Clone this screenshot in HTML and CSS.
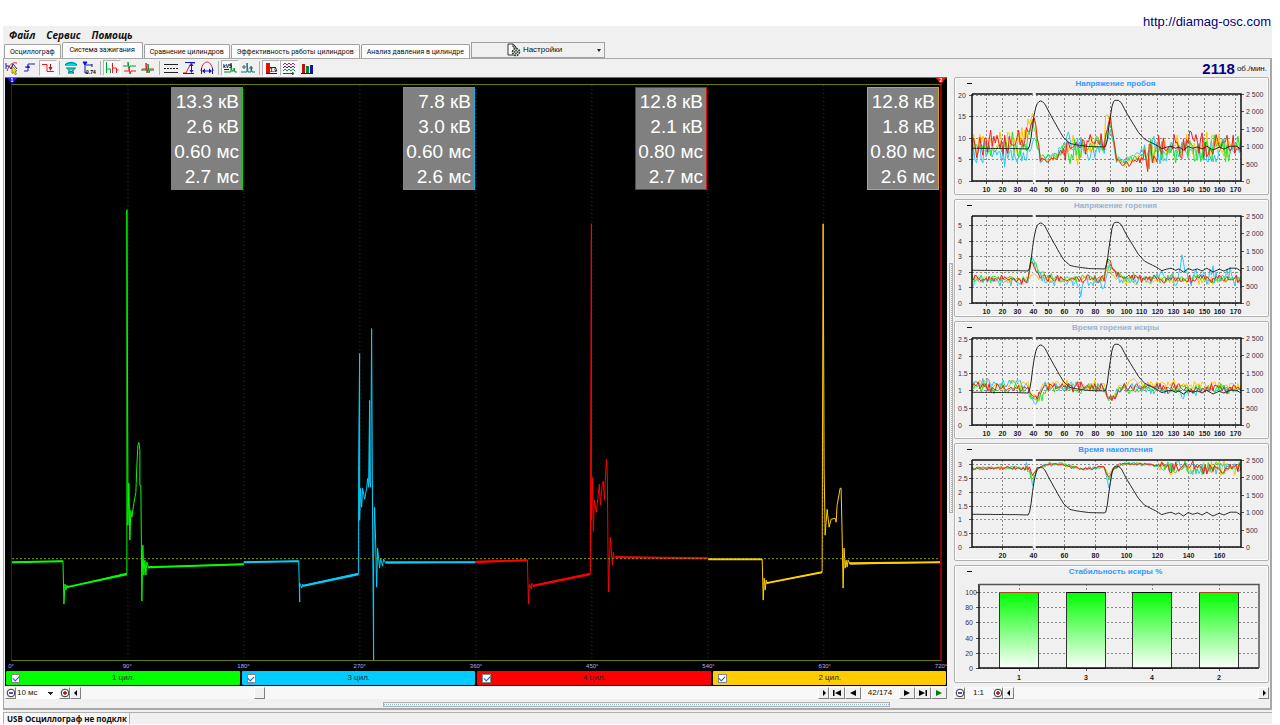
FILE: index.html
```html
<!DOCTYPE html>
<html lang="ru">
<head>
<meta charset="utf-8">
<title>Осциллограф — Система зажигания</title>
<link rel="stylesheet" href="styles.css">
</head>
<body>
<header class="site"><a href="http://diamag-osc.com">http://diamag-osc.com</a></header>
<div class="window">
  <nav class="menu">
    <button type="button">Файл</button><button type="button">Сервис</button><button type="button">Помощь</button>
  </nav>
  <div class="tabs" role="tablist">
    <button type="button" role="tab" class="tab">Осциллограф</button>
    <button type="button" role="tab" class="tab active" aria-selected="true">Система зажигания</button>
    <button type="button" role="tab" class="tab">Сравнение цилиндров</button>
    <button type="button" role="tab" class="tab">Эффективность работы цилиндров</button>
    <button type="button" role="tab" class="tab">Анализ давления в цилиндре</button>
    <button type="button" class="settings">
      <svg width="14" height="14" viewBox="0 0 14 14"><path d="M1 1h5l3 3v8H1zM6 1v3h3" fill="#fff" stroke="#333"/><circle cx="9" cy="9" r="3.5" fill="#cfd8cf" stroke="#344034" stroke-width="1.6" stroke-dasharray="1.8 .9"/><circle cx="9" cy="9" r="1.4" fill="#fff" stroke="#344034"/></svg>
      <span>Настройки</span><i class="caret"></i>
    </button>
  </div>
  <div class="page">
    <div class="toprow">
      <div class="toolbar">
        <button type="button" aria-label="Курсор"><svg viewBox="0 0 14 14"><path d="M1 2v6M1 5h3l2 3 2-5 4 5" fill="none" stroke="#1414c8"/><path d="M2 10c2-6 5-9 10-8" fill="none" stroke="#e02020"/><path d="M7 5l5 5-2 .3 1.5 2.7-1.6.6-1.4-2.5L7 12.500z" fill="#ffe600" stroke="#554400" stroke-width=".6"/></svg></button>
        <button type="button" aria-label="Фронт"><svg viewBox="0 0 14 14"><path d="M1 10h4V3h7M2 6h5" fill="none" stroke="#1c1cd0"/><path d="M3 7l2-3 2 3z" fill="#1c1cd0"/></svg></button>
        <button type="button" class="on" aria-label="Спад"><svg viewBox="0 0 14 14"><path d="M1 3.500h5v7h7" fill="none" stroke="#e02020"/><path d="M9.500 3v4" stroke="#a01010"/><path d="M7.500 6l2 4 2-4z" fill="#c01010"/></svg></button>
        <i class="sep"></i>
        <button type="button" aria-label="Синхронизация"><svg viewBox="0 0 14 14"><path d="M1 3c3-3 9-3 12 0v2H1zM3 7h8v2H3zM4 10h6v3H4z" fill="#00d8e8"/><path d="M1 4c3-3 9-3 12 0M2 7h10M4 9l6 3M10 9l-6 3" fill="none" stroke="#087878"/></svg></button>
        <button type="button" aria-label="Время"><svg viewBox="0 0 14 14"><path d="M1 1h4L3 4zM3 2v10M4 4h6" fill="#1010d0" stroke="#1010d0"/><path d="M10 3v3M3 12h3" stroke="#222"/><text x="4" y="13" font-size="5" font-weight="bold">0.74</text></svg></button>
        <i class="sep"></i>
        <button type="button" class="on" aria-label="Парад"><svg viewBox="0 0 14 14"><path d="M1.500 1v11M1.500 8h4v4" fill="none" stroke="#00a030"/><path d="M7.500 2v10M7.500 7h4v5M11.500 9h2" fill="none" stroke="#e02020"/></svg></button>
        <button type="button" aria-label="Растр"><svg viewBox="0 0 14 14"><path d="M0 5h5V1l1 6 1-2h6" fill="none" stroke="#00a030"/><path d="M1 10h5V6l1 7 1-3h5" fill="none" stroke="#e02020"/></svg></button>
        <button type="button" aria-label="Наложение"><svg viewBox="0 0 14 14"><path d="M1 8h4V2l1 10 1-4h6" fill="none" stroke="#e02020"/><path d="M0 9h7V3l1 9 1-3h4" fill="none" stroke="#00902c"/></svg></button>
        <i class="sep"></i>
        <button type="button" aria-label="Сетка"><svg viewBox="0 0 14 14"><path d="M0 3.500h14M0 11.500h14" stroke="#222"/><path d="M0 7.500h14" stroke="#222" stroke-dasharray="2 1"/></svg></button>
        <button type="button" aria-label="По высоте"><svg viewBox="0 0 14 14"><path d="M1 12h3L9 2h4" fill="none" stroke="#e02020"/><path d="M3 1.500h10M1 12.500h11M9.500 4v7" stroke="#1414c8"/><path d="M7.500 5l2-3 2 3zM7.500 9l2 3 2-3z" fill="#1414c8"/></svg></button>
        <button type="button" aria-label="По ширине"><svg viewBox="0 0 14 14"><path d="M1 10C2 3 5 1 7 1s5 2 6 9" fill="none" stroke="#e02020"/><path d="M3 10h8M1.500 7v6M12.500 7v6" stroke="#1414c8"/><path d="M5 7.500L2 10l3 2.500zM9 7.500l3 2.500-3 2.500z" fill="#1414c8"/></svg></button>
        <i class="sep"></i>
        <button type="button" class="on" aria-label="Значения"><svg viewBox="0 0 14 14"><path d="M1 11h7V2l1 8h2V7l1 4h2" fill="none" stroke="#008c2c"/><text x="0" y="7" font-size="5" font-weight="bold">kV5</text><path d="M1 8.500h5" stroke="#222"/></svg></button>
        <button type="button" aria-label="Отметки"><svg viewBox="0 0 14 14"><path d="M0 11h6V2l1 9h3V5l1 6h3" fill="none" stroke="#087878"/><path d="M1 6h4M3 4v4M8 7h4" stroke="#555"/></svg></button>
        <i class="sep"></i>
        <button type="button" class="on" aria-label="Таблица"><svg viewBox="0 0 14 14"><path d="M2 2h4v10H2z" fill="#e01010"/><text x="6" y="11" font-size="5" font-weight="bold">1.9</text><path d="M2 12.500h11M6 6.500h6" stroke="#222"/></svg></button>
        <button type="button" class="on" aria-label="Графики"><svg viewBox="0 0 14 14"><g fill="none"><path d="M1 4l2-2 2 2 2-2 2 2 2-2 2 2" stroke="#e02020"/><path d="M1 7l2-2 2 2 2-2 2 2 2-2 2 2" stroke="#2020e0"/><path d="M1 10l2-2 2 2 2-2 2 2 2-2 2 2" stroke="#00a030"/><path d="M1 12.500h11M10 11l2 1.500-2 1.500" stroke="#444"/></g></svg></button>
        <button type="button" aria-label="Диаграмма"><svg viewBox="0 0 14 14"><path d="M2 3h3v9H2z" fill="#c01010"/><path d="M6 5h3v7H6z" fill="#008830"/><path d="M10 4h3v8h-3z" fill="#1414a8"/><path d="M1 12.500h12" stroke="#222"/></svg></button>
      </div>
      <div class="rpm"><strong>2118</strong><span>об./мин.</span></div>
    </div>
    <div class="work">
      <section class="left">
        <div class="scope">
          <div class="flags"><b class="start">1</b><b class="end">2</b></div>
          <div class="plot">
            <svg class="wave" viewBox="12 84 929 576" preserveAspectRatio="none" id="wave"></svg>
            <div class="readouts">
              <div><p class="box green">13.3 кВ<br>2.6 кВ<br>0.60 мс<br>2.7 мс</p></div>
              <div><p class="box cyan">7.8 кВ<br>3.0 кВ<br>0.60 мс<br>2.6 мс</p></div>
              <div><p class="box red">12.8 кВ<br>2.1 кВ<br>0.80 мс<br>2.7 мс</p></div>
              <div><p class="box gold">12.8 кВ<br>1.8 кВ<br>0.80 мс<br>2.6 мс</p></div>
            </div>
          </div>
          <div class="degrees"><span>0°</span><span>90°</span><span>180°</span><span>270°</span><span>360°</span><span>450°</span><span>540°</span><span>630°</span><span>720°</span></div>
          <div class="cylinders">
            <label class="cyl green"><input type="checkbox" checked><span>1 цил.</span></label>
            <label class="cyl cyan"><input type="checkbox" checked><span>3 цил.</span></label>
            <label class="cyl red"><input type="checkbox" checked><span>4 цил.</span></label>
            <label class="cyl gold"><input type="checkbox" checked><span>2 цил.</span></label>
          </div>
        </div>
        <div class="controls">
          <button type="button" aria-label="Уменьшить"><svg viewBox="0 0 10 10"><circle cx="5" cy="5" r="3.800" fill="#fff" stroke="#333"/><path d="M3 5h4" stroke="#1414a0" stroke-width="1.500"/></svg></button>
          <select aria-label="Развёртка"><option>10 мс</option></select>
          <button type="button" aria-label="Увеличить"><svg viewBox="0 0 10 10"><circle cx="5" cy="5" r="3.800" fill="#fff" stroke="#333"/><path d="M3 5h4M5 3v4" stroke="#a01414" stroke-width="1.500"/></svg></button>
          <button type="button" aria-label="Влево"><svg viewBox="0 0 10 10"><path d="M6 2v6L3 5z"/></svg></button>
          <div class="track"><i class="thumb"></i></div>
          <button type="button" aria-label="Вправо"><svg viewBox="0 0 10 10"><path d="M4 2v6l3-3z"/></svg></button>
          <button type="button" class="wide" aria-label="В начало"><svg viewBox="0 0 10 10"><path d="M1 2h1.500v6H1zM9 2v6L3 5z"/></svg></button>
          <button type="button" class="wide" aria-label="Назад"><svg viewBox="0 0 10 10"><path d="M8 2v6L2 5z"/></svg></button>
          <output>42/174</output>
          <button type="button" class="wide" aria-label="Вперёд"><svg viewBox="0 0 10 10"><path d="M2 2v6l6-3z"/></svg></button>
          <button type="button" class="wide" aria-label="В конец"><svg viewBox="0 0 10 10"><path d="M1 2v6l6-3zM7.500 2H9v6H7.500z"/></svg></button>
          <button type="button" class="wide" aria-label="Пуск"><svg viewBox="0 0 10 10"><path d="M2 2v6l6-3z" fill="#008000"/></svg></button>
        </div>
        <div class="hgrip"><i></i></div>
      </section>
      <div class="vgrip"><i></i></div>
      <aside class="side">
        <section class="panel" data-chart="breakdown"><h2>Напряжение пробоя</h2></section>
        <section class="panel dim" data-chart="burn"><h2>Напряжение горения</h2></section>
        <section class="panel dim" data-chart="time"><h2>Время горения искры</h2></section>
        <section class="panel" data-chart="dwell"><h2>Время накопления</h2></section>
        <section class="panel" data-chart="stability"><h2>Стабильность искры %</h2></section>
        <div class="controls">
          <button type="button" aria-label="Уменьшить"><svg viewBox="0 0 10 10"><circle cx="5" cy="5" r="3.800" fill="#fff" stroke="#333"/><path d="M3 5h4" stroke="#1414a0" stroke-width="1.500"/></svg></button>
          <output class="scale">1:1</output>
          <button type="button" aria-label="Увеличить"><svg viewBox="0 0 10 10"><circle cx="5" cy="5" r="3.800" fill="#fff" stroke="#333"/><path d="M3 5h4M5 3v4" stroke="#a01414" stroke-width="1.500"/></svg></button>
          <button type="button" aria-label="Влево"><svg viewBox="0 0 10 10"><path d="M6 2v6L3 5z"/></svg></button>
          <div class="track"></div>
          <button type="button" aria-label="Вправо"><svg viewBox="0 0 10 10"><path d="M4 2v6l3-3z"/></svg></button>
        </div>
      </aside>
    </div>
  </div>
  <footer class="status"><span>USB Осциллограф не подклк</span></footer>
</div>
<script src="charts.js"></script>
</body>
</html>
```
FILE: styles.css
```css
* { box-sizing: border-box; }
body {
  margin: 0;
  background: #fff;
  color: #111;
  font: 8px/10px "Liberation Sans", Arial, sans-serif;
}
button, select, input, output { font: inherit; color: inherit; margin: 0; padding: 0; }
h2, p { margin: 0; }
svg { display: block; }

.site {
  height: 26px;
  padding: 13px 9px 0 0;
  text-align: right;
  font-size: 13px;
  line-height: 17px;
}
.site a { color: #000080; text-decoration: none; position: relative; }

.window { margin: 0 8px 4px 3px; background: #f0f0f0; }

.menu { display: flex; gap: 11px; padding: 1px 6px 0; height: 16px; }
.menu button {
  border: 0;
  background: none;
  font: italic bold 10px/14px "Open Sans", "Noto Sans", sans-serif;
}

.tabs {
  display: flex;
  align-items: flex-end;
  gap: 1px;
  height: 16px;
  padding-left: 1px;
}
.tab {
  height: 14px;
  padding: 0 5px;
  border: 1px solid #a0a0a0;
  border-bottom: 0;
  border-radius: 2px 2px 0 0;
  background: #fcfcfc;
  font-family: Roboto, "Liberation Sans", sans-serif;
  font-size: 7px;
  white-space: nowrap;
}
.tab.active { height: 16px; padding: 0 7px 2px; }
.settings {
  display: flex;
  align-items: center;
  gap: 2px;
  width: 134px;
  height: 16px;
  padding: 0 3px 0 35px;
  border: 1px solid #a0a0a0;
  background: #f0f0f0;
}
.caret { margin-left: auto; border: 2px solid transparent; border-top: 3px solid #222; border-bottom: 0; }

.page { border: 1px solid #a8a8a8; border-width: 1px 2px 2px 1px; padding: 1px 1px 0 0; }
.toprow { display: flex; justify-content: space-between; height: 17px; }
.toolbar { display: flex; margin-left: -1px; }
.toolbar button {
  width: 18px;
  height: 16px;
  padding: 0 1px;
  border: 1px solid transparent;
  background: none;
}
.toolbar button.on { border-color: #b4b4b4 #fff #fff #b4b4b4; background: #f8f8f8; }
.toolbar svg { width: 14px; height: 14px; }
.sep { width: 1px; height: 14px; margin: 1px 2px; background: #b0b0b0; }
.rpm { display: flex; align-items: center; gap: 2px; padding-right: 2px; }
.rpm strong { color: #000080; font-size: 15px; }

.work { display: flex; }
.left { flex: 1; display: flex; flex-direction: column; min-width: 0; }
.scope {
  flex: 1;
  display: flex;
  flex-direction: column;
  margin-left: 1px;
  border-top: 1px solid #707070;
  background: #000;
}
.flags { display: flex; justify-content: space-between; height: 6px; padding: 0 1px 0 2px; }
.flags b {
  width: 10px;
  height: 6px;
  color: #fff;
  font-size: 5px;
  line-height: 5px;
  text-align: center;
  clip-path: polygon(0 0, 100% 0, 50% 100%);
}
.start { background: #1414ff; }
.end { background: #ff1010; }
.plot {
  position: relative;
  flex: 1;
  margin: 0 5px 0 6px;
  border: 1px solid #6c7a00;
  border-left-color: #1414c0;
  border-right: 2px solid #900000;
}
.wave { position: absolute; width: 100%; height: 100%; }
.wave path { fill: none; vector-effect: non-scaling-stroke; }
.readouts { position: absolute; inset: 2px 0 auto; display: grid; grid-template-columns: repeat(4, 1fr); }
.box {
  width: 72px;
  margin: 0 1px 0 auto;
  padding: 1px 3px 0 0;
  border: 1px solid;
  background: #808080;
  color: #fff;
  font-size: 19px;
  line-height: 25px;
  text-align: right;
  white-space: nowrap;
}
.box.green { border-color: #00d800; }
.box.cyan { border-color: #00b8f0; }
.box.red { border-color: #d81010; }
.box.gold { border-color: #d8a800; }
.degrees { display: flex; justify-content: space-between; height: 10px; padding: 0 6px; color: #b8a8ff; font-size: 6px; }
.degrees span { display: flex; justify-content: center; width: 0; }
.cylinders { display: grid; grid-template-columns: repeat(4, 1fr); gap: 2px; padding: 0 1px 1px; }
.cyl { display: flex; align-items: center; height: 14px; padding: 0 5px; border-radius: 1px; color: #222; }
.cyl span { flex: 1; text-align: center; padding-right: 8px; }
.cyl input {
  appearance: none;
  width: 9px;
  height: 9px;
  border: 1px solid #888;
  background: #fff;
  display: grid;
  place-items: center;
}
.cyl input:checked::after {
  content: "";
  width: 5px;
  height: 3px;
  border: solid #1060c8;
  border-width: 0 0 1px 1px;
  transform: rotate(-45deg);
}
.cyl.green { background: #00ff00; }
.cyl.cyan { background: #00ccff; }
.cyl.red { background: #ff0000; }
.cyl.gold { background: #ffcc00; }

.controls { display: flex; height: 12px; margin-top: 1px; background: #f8f8f8; }
.controls button {
  width: 11px;
  height: 12px;
  border: 1px solid #fff;
  border-right-color: #808080;
  border-bottom-color: #808080;
  background: #f0f0f0;
}
.controls button.wide { width: 16px; }
.controls svg { width: 10px; height: 10px; margin: auto; }
.controls select {
  appearance: none;
  width: 43px;
  border: 0;
  padding-left: 1px;
  background: #fff conic-gradient(from -45deg at 50% 100%, #222 90deg, transparent 0) no-repeat 32px 5px / 5px 3px;
}
.left .controls { margin-left: 1px; }
.left .controls output { width: 38px; text-align: center; line-height: 12px; }
.controls .scale { width: 27px; text-align: center; line-height: 12px; }
.track { flex: 1; }
.thumb {
  display: block;
  width: 11px;
  height: 12px;
  margin-left: 23.5%;
  border: 1px solid #fff;
  border-right-color: #808080;
  border-bottom-color: #808080;
  background: #f0f0f0;
}

.hgrip { height: 9px; padding: 3px 57px 1px 379px; }
.hgrip i { display: block; height: 5px; border: 1px solid #b0b0b0; background: linear-gradient(90deg, #90b8e0 50%, #f4f8ff 0) 0 1px / 2px 1px repeat-x; }
.vgrip { display: flex; align-items: center; width: 7px; padding: 0 1px 9px 2px; }
.vgrip i { width: 5px; height: 250px; border: 1px solid #b0b0b0; background: linear-gradient(#90b8e0 50%, #f4f8ff 0) 1px 0 / 2px 2px repeat-y; }

.side { width: 315px; display: flex; flex-direction: column; gap: 4px; padding-bottom: 9px; }
.panel { height: 118px; border: 1px solid #b0b0b0; border-radius: 2px; box-shadow: inset 0 0 0 1px #fff; padding-top: 1px; }
.panel h2 { color: #3399ff; font-size: 8px; line-height: 10px; text-align: center; padding-right: 9px; }
.panel h2::before { content: ""; float: left; width: 5px; height: 1px; margin: 4px 0 0 12px; background: #111; }
.panel.dim h2 { color: #99b4d1; }
.panel svg { width: 313px; height: 104px; }
.panel path { fill: none; }
.axis { font-size: 7px; fill: #403048; }
.axis-x { font-size: 7px; font-weight: bold; text-anchor: middle; fill: #222; }
.grid { stroke: #8a8a8a; stroke-dasharray: 2 2; }
.side .controls { margin-top: 0; }

.status { margin-top: 2px; border-top: 1px solid #b0b0b0; }
.status span {
  display: block;
  width: 127px;
  padding-left: 3px;
  border: solid #b0b0b0;
  border-width: 0 1px 0 1px;
  background: #f8f8f8;
  font: bold 8px/11px "Open Sans", "Noto Sans", sans-serif;
  white-space: nowrap;
}
```
FILE: charts.js
```js
const COLORS = ['#ffc400', '#30c8f0', '#20e820', '#f02020'];
const X0 = 17, X1 = 286, TOP = 5, BOTTOM = 92;

const RPM = [[1,940],[15,935],[30,930],[37,920],[38,1000],[39,1250],[40,1600],[41,1900],[42,2120],[43,2230],
  [44,2280],[45,2300],[46,2290],[48,2200],[50,2030],[53,1780],[57,1460],[60,1240],[64,1080],[68,1040],[76,990],
  [86,980],[87,1000],[88,1200],[89,1550],[90,1850],[91,2130],[92,2280],[93,2320],[95,2320],[97,2250],[100,1990],
  [104,1690],[108,1400],[112,1200],[116,1110],[120,1020],[123,930],[126,970],[129,1000],[132,940],[134,980],
  [137,890],[140,990],[143,940],[146,980],[149,920],[152,1000],[156,890],[160,970],[163,920],[167,1000],[171,1000],[174,920]];

function random(seed) {
  return () => {
    seed = (seed * 1664525 + 1013904223) % 4294967296;
    return seed / 4294967296;
  };
}

function interpolate(points, x) {
  for (let i = 1; i < points.length; i++) {
    if (x <= points[i][0]) {
      const [a, b] = [points[i - 1], points[i]];
      return a[1] + (b[1] - a[1]) * (x - a[0]) / (b[0] - a[0]);
    }
  }
  return points[points.length - 1][1];
}

const CHARTS = {
  breakdown: {
    max: 20.2, ticks: [0, 5, 10, 15, 20], step: 10, seed: 7, quantum: .2,
    bases: [[[1,8.500],[36,10],[38,13],[39,15],[41,15],[45,5],[54,5.200],[66,7.500],[86,9],[87,15],[90,15],[94,5],[98,4],[110,5.500],[130,8],[174,8.500]],
            [[1,6.500],[36,6],[38,7],[41,11],[45,5],[54,5.500],[60,8],[86,7],[90,12],[94,5],[98,4.500],[110,7],[174,7.500]],
            [[1,8],[36,8],[40,14],[45,5],[54,5.500],[60,7],[86,9],[90,14],[94,5],[98,4.500],[110,6.500],[174,8]],
            [[1,8],[10,9.500],[36,9.500],[41,15],[45,5.500],[54,5],[60,7],[86,9],[90,15],[94,5],[98,4],[110,5],[125,8],[174,8.500]]],
    noise: x => (x > 37 && x < 60) || (x > 86 && x < 112) ? 1.2 : 4
  },
  burn: {
    max: 5.6, ticks: [0, 1, 2, 3, 4, 5], step: 10, seed: 21, quantum: .1,
    bases: [[[1,1.500],[37,1.500],[40,2],[48,1.500],[86,1.500],[88,2.200],[94,1.700],[100,1.450],[174,1.450]],
            [[1,1.400],[37,1.400],[39,3],[43,2.200],[48,1.400],[69,1.350],[71,.600],[73,1.400],[86,1.200],[89,2.500],[96,1.500],[134,1.600],[136,3],[138,1.800],[174,1.500]],
            [[1,1.600],[37,1.500],[39,2.800],[44,2.200],[50,1.600],[86,1.600],[88,2.700],[94,2],[100,1.600],[174,1.600]],
            [[1,1.550],[37,1.450],[39,2.500],[44,1.900],[50,1.550],[86,1.550],[88,2.900],[94,1.900],[100,1.600],[174,1.500]]],
    noise: (x, i) => i === 1 ? (x > 122 ? .8 : .4) : .3
  },
  time: {
    max: 2.52, ticks: [0, .5, 1, 1.5, 2, 2.5], step: 10, seed: 44, quantum: .05,
    bases: [[[1,1.200],[37,1.200],[39,.850],[43,.800],[47,1.150],[86,1.150],[88,.850],[92,.850],[98,1.200],[174,1.150]],
            [[1,1.200],[37,1.150],[39,.800],[42,.650],[47,1.100],[86,1.100],[88,.750],[92,.800],[98,1.100],[134,1],[136,.650],[138,.950],[174,1.050]],
            [[1,1.050],[37,1.050],[39,.800],[43,.700],[50,1.050],[86,1.050],[88,.800],[92,.800],[98,1.050],[174,1.050]],
            [[1,1.100],[37,1.100],[39,.800],[43,.750],[47,1.100],[86,1.100],[88,.850],[92,.800],[98,1.100],[174,1.050]]],
    noise: x => .18
  },
  dwell: {
    max: 3.15, ticks: [0, .5, 1, 1.5, 2, 2.5, 3], step: 20, seed: 91, quantum: .02,
    bases: [2.600, 2.200, 2.450, 2.500].map(dip =>
      [[1,2.850],[34,2.870],[37,2.850],[40,dip],[43,2.850],[50,3],[58,3],[72,2.820],[86,2.900],[89,dip],[92,2.850],[99,3.030],[118,2.970],[130,2.870],[174,2.830]]),
    noise: x => x > 120 ? .3 : x > 34 && x < 42 ? .25 : .08
  }
};

const px = n => X0 + (n - 1) * (X1 - X0) / 173;
const point = (x, y) => x.toFixed(1) + ' ' + y.toFixed(1);

function lineChart(c) {
  const py = v => BOTTOM - v / c.max * (BOTTOM - TOP);
  const rand = random(c.seed);
  let out = '';
  for (const t of c.ticks) {
    out += `<path class="grid" d="M${X0} ${Math.round(py(t)) + .5}H${X1}"/><path stroke="#555" d="M${X0 - 3} ${Math.round(py(t)) + .5}h3"/>`;
    out += `<text class="axis" x="3" y="${Math.round(py(t)) + 3}">${t}</text>`;
  }
  for (let n = c.step; n < 174; n += c.step) {
    const x = Math.round(px(n)) + .5;
    out += `<path class="grid" d="M${x} ${TOP}V${BOTTOM}"/><path stroke="#555" d="M${x} ${BOTTOM}v3"/>`;
    out += `<text class="axis-x" x="${x}" y="103">${n}</text>`;
  }
  for (let r = 0; r <= 2500; r += 500) {
    const y = BOTTOM - r / 2500 * (BOTTOM - TOP);
    const label = r < 1000 ? r : Math.floor(r / 1000) + ' ' + String(r % 1000).padStart(3, '0');
    out += `<path stroke="#555" d="M${X1} ${Math.round(y) + .5}h3"/><text class="axis" x="291" y="${Math.round(y) + 3}">${label}</text>`;
  }
  out += `<path stroke="#fff" stroke-width="2" d="M${px(41)} ${TOP - 1}V${BOTTOM + 2}"/>`;
  c.bases.forEach((base, i) => {
    const pts = [];
    for (let n = 1; n <= 174; n++) {
      const raw = interpolate(base, n) + (rand() + rand() - 1) * c.noise(n, i);
      const v = Math.round(raw / c.quantum) * c.quantum;
      pts.push(point(px(n), Math.max(TOP + 1, py(v))));
    }
    out += `<path stroke="${COLORS[i]}" d="M${pts.join('L')}"/>`;
  });
  const rpm = [];
  for (let n = 1; n <= 174; n++) rpm.push(point(px(n), BOTTOM - interpolate(RPM, n) / 2500 * (BOTTOM - TOP)));
  out += `<path stroke="#222" d="M${rpm.join('L')}"/>`;
  out += `<path stroke="#111" stroke-width="1.5" d="M${X0} ${TOP}H${px(40)}M${px(42)} ${TOP}H${X1}V${BOTTOM}H${px(42)}M${px(40)} ${BOTTOM}H${X0}V${TOP}"/>`;
  return out;
}

function barChart() {
  let out = '<defs><linearGradient id="fade" x2="0" y2="1"><stop stop-color="#00ff00"/><stop offset="1" stop-color="#fff"/></linearGradient></defs>';
  for (let v = 0; v <= 100; v += 20) {
    const y = 91 - Math.round(v * .76) + .5;
    out += `<path class="grid" d="M24 ${y}H304"/><path stroke="#555" d="M21 ${y}h3"/><text class="axis" text-anchor="end" x="${v === 100 ? 22 : 18}" y="${y + 2}">${v}</text>`;
  }
  [1, 3, 4, 2].forEach((name, i) => {
    const x = 44 + Math.round(i * 66.7);
    out += `<path class="grid" d="M${x + 20}.5 7V91"/><path stroke="#555" d="M${x + 20}.5 91v3"/>`;
    out += `<rect x="${x}.5" y="15.5" width="39" height="76" fill="url(#fade)" stroke="#333"/>`;
    out += `<path stroke="${i % 3 ? '#111' : '#b04020'}" d="M${x} 15.5h40"/><text class="axis-x" x="${x + 20}" y="103">${name}</text>`;
  });
  out += '<path stroke="#111" stroke-width="1.5" d="M24 7V91H304"/><path stroke="#555" stroke-width="1.5" d="M24 7.5H304V91"/>';
  return out;
}

document.querySelectorAll('.panel').forEach(panel => {
  const kind = panel.dataset.chart;
  panel.insertAdjacentHTML('beforeend', `<svg viewBox="0 0 313 104">${kind === 'stability' ? barChart() : lineChart(CHARTS[kind])}</svg>`);
});

const TRACES = [
  ['#00ff00', 'M12 562L63 561M67 587L127 574M148 567L244 564',
   'M12 562L63 561 64 604 65 584 66 590 67 585 68 587 127 573 127 209 128 470 128 525 129 483 130 540 131 510 132 517 134 503 136 492 137 465 138 445 139 442 140 450 140 485 141 485 142 601 143 545 144 575 145 560 146 575 147 562 149 568 151 566 153 567 244 564'],
  ['#00d0ff', 'M244 562L299 561M303 586L359 574M386 562L476 562',
   'M244 562L299 561 300 602 300 583 302 588 303 584 304 585 359 573 359 464 360 353 360 520 361 488 362 507 363 488 365 499 367 488 368 478 369 487 370 400 370 480 371 487 372 328 373 530 374 660 374 560 375 507 376 540 377 587 378 548 380 568 381 558 383 566 384 559 386 563 476 562'],
  ['#ff0000', 'M476 562L528 560M533 586L591 574M616 557L709 558',
   'M476 561L528 560 529 604 530 584 532 589 532 583 534 585 591 573 592 223 592 520 593 477 594 531 595 500 597 512 600 484 601 505 603 483 604 481 605 500 607 459 608 475 609 592 611 537 613 565 614 552 615 558 617 556 630 557 709 558'],
  ['#ffd000', 'M709 559L763 559M767 583L823 572M850 563L941 562',
   'M709 559L763 559 764 600 765 578 766 590 767 580 768 583 823 572 824 223 825 467 826 535 828 509 830 527 832 519 836 518 837 522 838 505 841 488 842 488 843 533 844 588 845 548 846 568 847 560 848 567 849 560 851 564 941 562']
];
let wave = '';
for (let i = 1; i < 8; i++) wave += `<path stroke="#333" stroke-dasharray="1 3" d="M${12 + i * 116.1} 84V660"/>`;
for (const [color, flat, full] of TRACES) {
  wave += `<path stroke="${color}" stroke-width="2" d="${flat}"/><path stroke="${color}" d="${full}"/>`;
}
wave += '<path stroke="#8a9a00" stroke-dasharray="2 2" d="M12 558.5H941"/>';
document.getElementById('wave').innerHTML = wave;
```
